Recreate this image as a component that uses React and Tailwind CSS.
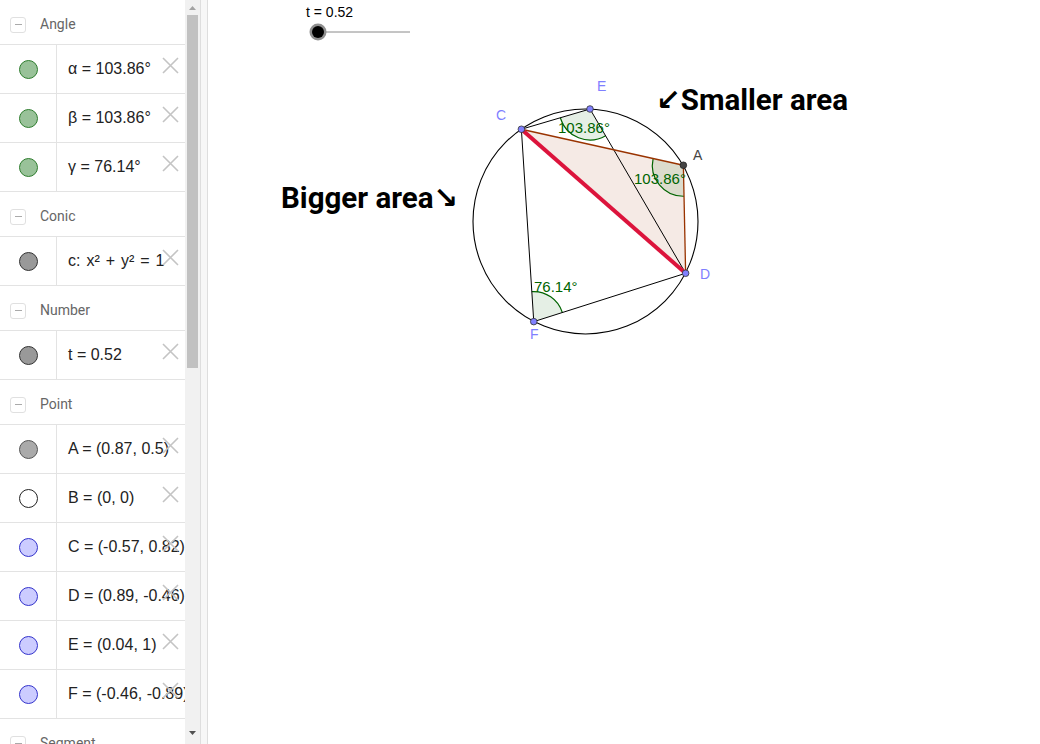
const sections = [
  {
    title: "Angle",
    items: [
      { dot: "green", text: "α = 103.86°" },
      { dot: "green", text: "β = 103.86°" },
      { dot: "green", text: "γ = 76.14°" },
    ],
  },
  { title: "Conic", items: [{ dot: "gray", text: "c: x² + y² = 1", wide: true }] },
  { title: "Number", items: [{ dot: "gray", text: "t = 0.52" }] },
  {
    title: "Point",
    items: [
      { dot: "lightgray", text: "A = (0.87, 0.5)" },
      { dot: "white", text: "B = (0, 0)" },
      { dot: "blue", text: "C = (-0.57, 0.82)" },
      { dot: "blue", text: "D = (0.89, -0.46)" },
      { dot: "blue", text: "E = (0.04, 1)" },
      { dot: "blue", text: "F = (-0.46, -0.89)" },
    ],
  },
  { title: "Segment", items: [] },
];

const dotClass = {
  green: "bg-[#99c299] border-[#2e7d2e]",
  gray: "bg-[#999999] border-[#333333]",
  lightgray: "bg-[#aaaaaa] border-[#555555]",
  white: "bg-white border-[#222222]",
  blue: "bg-[#ccccff] border-[#3333cc]",
};

function Header({ title }) {
  return (
    <div className="h-[45px] pt-[5px] flex items-center border-b border-[#e3e3e3]">
      <div className="ml-[10px] w-[16px] h-[16px] border border-[#e0e0e0] rounded-[3px] flex items-center justify-center">
        <div className="w-[7px] h-[1.5px] bg-[#aaaaaa]" />
      </div>
      <span className="ml-[14px] text-[14px] text-[#666666] font-['Roboto',sans-serif]">
        {title}
      </span>
    </div>
  );
}

function Row({ dot, text, wide }) {
  return (
    <div className="h-[49px] flex border-b border-[#e3e3e3] relative">
      <div className="w-[57px] shrink-0 border-r border-[#e3e3e3] flex items-center justify-center">
        <div className={"w-[19px] h-[19px] rounded-full border " + dotClass[dot]} />
      </div>
      <div
        className={
          "pl-[11px] flex items-center whitespace-nowrap text-[16px] text-[#222222] font-['Liberation_Sans',sans-serif] " +
          (wide ? "[word-spacing:1.5px]" : "")
        }
      >
        {text}
      </div>
      <svg
        width="17"
        height="17"
        viewBox="0 0 17 17"
        className="absolute left-[162px] top-[12px]"
      >
        <path d="M1 1 L16 16 M16 1 L1 16" stroke="#c4c4c4" strokeWidth="1.6" fill="none" />
      </svg>
    </div>
  );
}

function Sidebar() {
  return (
    <div className="w-[185px] shrink-0 h-full overflow-hidden bg-white">
      {sections.map((s) => (
        <div key={s.title}>
          <Header title={s.title} />
          {s.items.map((it) => (
            <Row key={it.text} dot={it.dot} text={it.text} wide={it.wide} />
          ))}
        </div>
      ))}
    </div>
  );
}

function Scrollbar() {
  return (
    <div className="w-[15px] shrink-0 h-full bg-[#f1f1f1] flex flex-col items-center">
      <svg width="15" height="15" className="shrink-0">
        <path d="M4 10 L11 10 L7.5 6 Z" fill="#a3a3a3" />
      </svg>
      <div className="w-[11px] h-[353px] bg-[#c1c1c1]" />
      <div className="flex-1" />
      <svg width="15" height="15" className="shrink-0 mb-[3px]">
        <path d="M4 5 L11 5 L7.5 9 Z" fill="#505050" />
      </svg>
    </div>
  );
}

const cx = 585.5;
const cy = 221.5;
const R = 112.5;
const pt = (x, y) => [cx + x * R, cy - y * R];
const A = pt(0.87, 0.5);
const C = pt(-0.57, 0.82);
const D = pt(0.89, -0.46);
const E = pt(0.04, 1);
const F = pt(-0.46, -0.89);

function wedge(V, P, Q, r) {
  const a1 = Math.atan2(P[1] - V[1], P[0] - V[0]);
  const a2 = Math.atan2(Q[1] - V[1], Q[0] - V[0]);
  const d1 = [Math.cos(a1), Math.sin(a1)];
  const d2 = [Math.cos(a2), Math.sin(a2)];
  const cross = d1[0] * d2[1] - d1[1] * d2[0];
  const sweep = cross > 0 ? 1 : 0;
  const s = [V[0] + r * d1[0], V[1] + r * d1[1]];
  const e = [V[0] + r * d2[0], V[1] + r * d2[1]];
  return {
    fill: `M${V[0]} ${V[1]} L${s[0]} ${s[1]} A${r} ${r} 0 0 ${sweep} ${e[0]} ${e[1]} Z`,
    arc: `M${s[0]} ${s[1]} A${r} ${r} 0 0 ${sweep} ${e[0]} ${e[1]}`,
  };
}

function Seg({ p, q, color = "#000", w = 1 }) {
  return <line x1={p[0]} y1={p[1]} x2={q[0]} y2={q[1]} stroke={color} strokeWidth={w} />;
}

function Canvas() {
  const wedges = [wedge(E, C, D, 31), wedge(A, C, D, 31), wedge(F, C, D, 30)];
  const sans = "Liberation Sans, Arial, sans-serif";
  const roboto = "Roboto, DejaVu Sans, sans-serif";
  return (
    <div className="flex-1 h-full bg-white">
      <svg width="832" height="744" viewBox="208 0 832 744" className="block">
        {/* slider */}
        <text x="306" y="17" fontSize="14" fontFamily={sans} fill="#000">t = 0.52</text>
        <line x1="318" y1="32" x2="410" y2="32" stroke="#8a8a8a" strokeWidth="1" />
        <circle cx="318" cy="32" r="8.5" fill="#8f8f8f" />
        <circle cx="318" cy="32" r="6" fill="#000" />

        {/* polygon */}
        <polygon
          points={`${C[0]},${C[1]} ${A[0]},${A[1]} ${D[0]},${D[1]}`}
          fill="rgba(153,51,0,0.1)"
        />
        {wedges.map((w, i) => (
          <g key={i}>
            <path d={w.fill} fill="rgba(0,100,0,0.1)" />
            <path d={w.arc} fill="none" stroke="#006400" strokeWidth="1.2" />
          </g>
        ))}
        <circle cx={cx} cy={cy} r={R} fill="none" stroke="#000" strokeWidth="1.1" />
        <Seg p={C} q={E} />
        <Seg p={E} q={D} />
        <Seg p={C} q={F} />
        <Seg p={F} q={D} />
        <Seg p={C} q={A} color="#993300" w={1.3} />
        <Seg p={A} q={D} color="#993300" w={1.3} />
        <Seg p={C} q={D} color="#dc143c" w={4} />

        {/* angle labels */}
        <text x="558" y="133" fontSize="15" fontFamily={sans} fill="#006400">103.86°</text>
        <text x="634" y="184" fontSize="15" fontFamily={sans} fill="#006400">103.86°</text>
        <text x="534" y="292" fontSize="15" fontFamily={sans} fill="#006400">76.14°</text>

        {/* points */}
        {[C, D, E, F].map((p, i) => (
          <circle key={i} cx={p[0]} cy={p[1]} r="3.3" fill="#8080ff" stroke="#333" strokeWidth="0.8" />
        ))}
        <circle cx={A[0]} cy={A[1]} r="3.3" fill="#444" stroke="#222" strokeWidth="0.8" />

        {/* point labels */}
        <text x="597" y="91" fontSize="14" fontFamily={sans} fill="#7f7fff">E</text>
        <text x="496" y="120" fontSize="14" fontFamily={sans} fill="#7f7fff">C</text>
        <text x="693" y="160" fontSize="14" fontFamily={sans} fill="#444">A</text>
        <text x="700" y="279" fontSize="14" fontFamily={sans} fill="#7f7fff">D</text>
        <text x="530" y="339" fontSize="14" fontFamily={sans} fill="#7f7fff">F</text>

        {/* notes */}
        <text x="281" y="208" fontSize="29.5" fontWeight="700" fontFamily={roboto} fill="#000">
          Bigger area↘
        </text>
        <text x="656" y="110" fontSize="29.5" fontWeight="700" fontFamily={roboto} fill="#000">
          ↙Smaller area
        </text>
      </svg>
    </div>
  );
}

export default function App() {
  return (
    <div className="w-[1040px] h-[744px] flex overflow-hidden bg-white">
      <Sidebar />
      <Scrollbar />
      <div className="w-[8px] shrink-0 h-full bg-[#f7f7f7] border-l border-r border-[#dedede]" />
      <Canvas />
    </div>
  );
}
